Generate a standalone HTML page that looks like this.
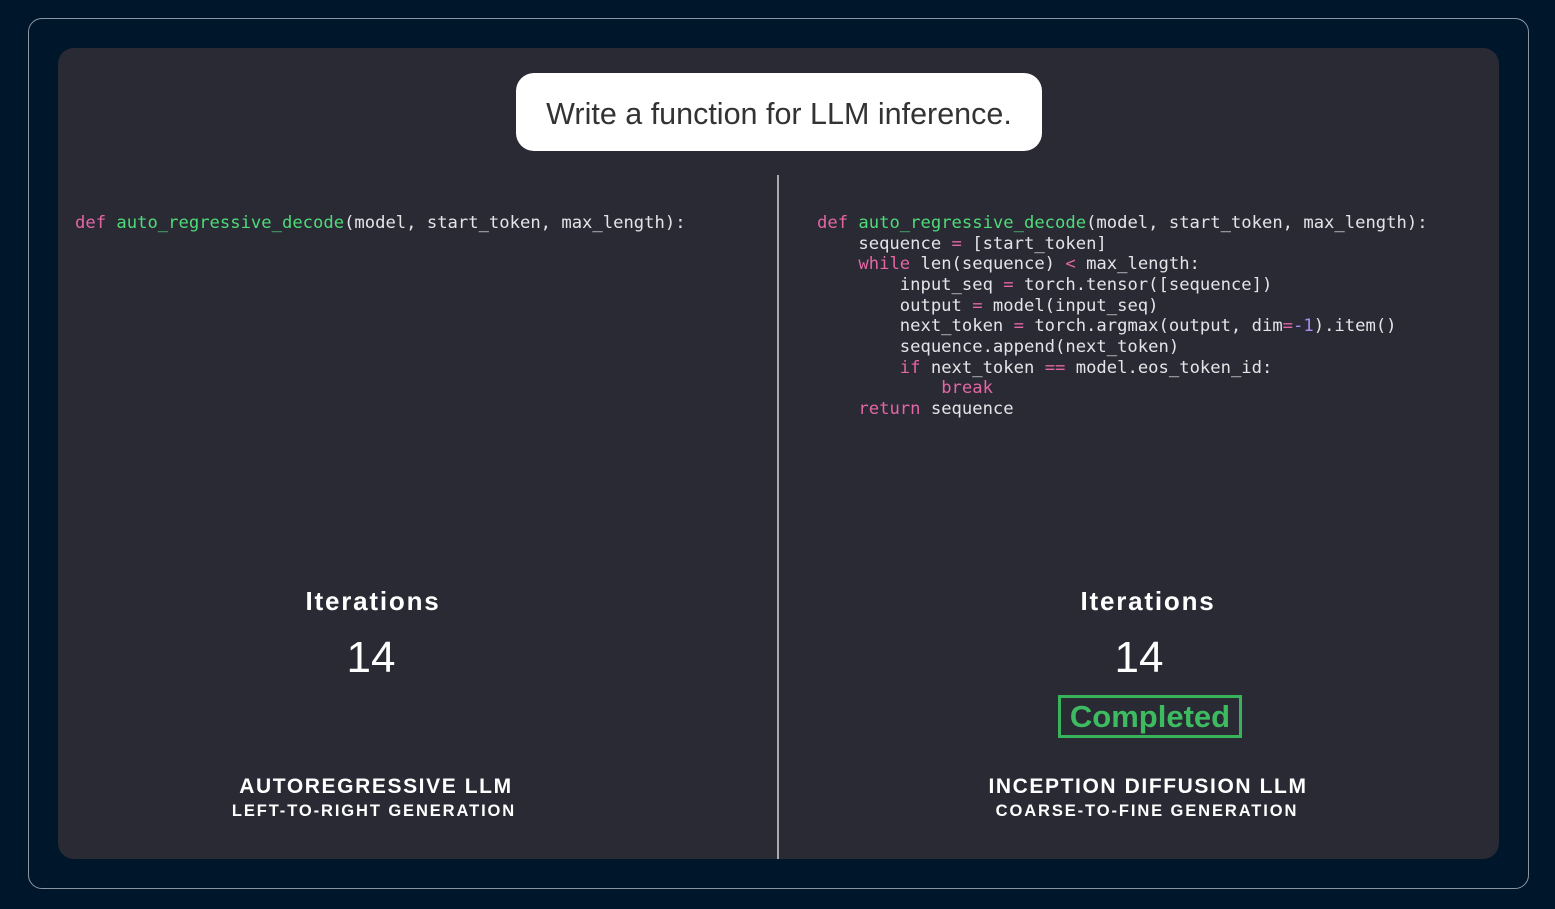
<!DOCTYPE html>
<html><head><meta charset="utf-8"><style>
*{margin:0;padding:0;box-sizing:border-box}
body{width:1555px;height:909px;background:#00172b;position:relative;overflow:hidden;font-family:"Liberation Sans",sans-serif}
.outer{position:absolute;left:28px;top:18px;width:1501px;height:871px;border:1px solid #8a96a3;border-radius:14px}
.panel{position:absolute;left:58px;top:48px;width:1441px;height:811px;background:#2a2a35;border-radius:16px}
.bubble{position:absolute;left:516px;top:73px;width:526px;height:78px;background:#fff;border-radius:18px;color:#333;font-size:30.5px;text-align:center;line-height:83px}
.div{position:absolute;left:777px;top:175px;width:2px;height:684px;background:#a9a9ae}
pre{position:absolute;font-family:"DejaVu Sans Mono","Liberation Mono",monospace;font-size:17.2px;line-height:20.67px;color:#e4e4e8}
.k{color:#e466a4}.f{color:#4fdb78}.n{color:#a88cf0}
.c{position:absolute;text-align:center;color:#fff;width:600px}
.it{font-weight:bold;font-size:26px;letter-spacing:1.8px}
.num{font-size:44px}
.t1{font-weight:bold;font-size:21px;letter-spacing:1.6px}
.t2{font-weight:bold;font-size:16.5px;letter-spacing:1.9px}
.done{position:absolute;left:1058px;top:695px;width:184px;height:43px;border:3px solid #37b35a;color:#3dbb60;font-weight:bold;font-size:31px;text-align:center;line-height:37px}
</style></head><body>
<div class="outer"></div>
<div class="panel"></div>
<div class="bubble">Write a function for LLM inference.</div>
<div class="div"></div>
<pre style="left:75px;top:213px"><span class="k">def</span> <span class="f">auto_regressive_decode</span>(model, start_token, max_length):</pre>
<pre style="left:817px;top:213px"><span class="k">def</span> <span class="f">auto_regressive_decode</span>(model, start_token, max_length):
    sequence <span class="k">=</span> [start_token]
    <span class="k">while</span> len(sequence) <span class="k">&lt;</span> max_length:
        input_seq <span class="k">=</span> torch.tensor([sequence])
        output <span class="k">=</span> model(input_seq)
        next_token <span class="k">=</span> torch.argmax(output, dim<span class="k">=</span><span class="n">-1</span>).item()
        sequence.append(next_token)
        <span class="k">if</span> next_token <span class="k">==</span> model.eos_token_id:
            <span class="k">break</span>
    <span class="k">return</span> sequence</pre>
<div class="c it" style="left:73px;top:586px">Iterations</div>
<div class="c num" style="left:71px;top:633px">14</div>
<div class="c t1" style="left:76px;top:775px">AUTOREGRESSIVE LLM</div>
<div class="c t2" style="left:74px;top:802px">LEFT-TO-RIGHT GENERATION</div>
<div class="c it" style="left:848px;top:586px">Iterations</div>
<div class="c num" style="left:839px;top:633px">14</div>
<div class="done">Completed</div>
<div class="c t1" style="left:848px;top:775px">INCEPTION DIFFUSION LLM</div>
<div class="c t2" style="left:847px;top:802px">COARSE-TO-FINE GENERATION</div>
</body></html>
